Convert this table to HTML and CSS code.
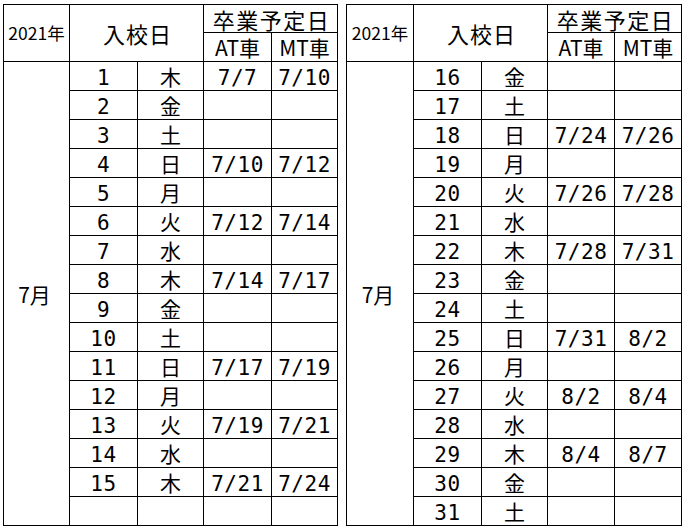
FILE: index.html
```html
<!DOCTYPE html>
<html lang="ja">
<head>
<meta charset="utf-8">
<link rel="stylesheet" href="styles.css">
</head>
<body>
<div class="page">
  <div class="sheet left">
    <div class="c year">2021年</div>
    <div class="c entry">入校日</div>
    <div class="c grad">卒業予定日</div>
    <div class="c car">AT車</div>
    <div class="c car">MT車</div>
    <div class="c month">7月</div>
    <div class="c n">1</div><div class="c w">木</div><div class="c d">7/7</div><div class="c d">7/10</div>
    <div class="c n">2</div><div class="c w">金</div><div class="c d"></div><div class="c d"></div>
    <div class="c n">3</div><div class="c w">土</div><div class="c d"></div><div class="c d"></div>
    <div class="c n">4</div><div class="c w">日</div><div class="c d">7/10</div><div class="c d">7/12</div>
    <div class="c n">5</div><div class="c w">月</div><div class="c d"></div><div class="c d"></div>
    <div class="c n">6</div><div class="c w">火</div><div class="c d">7/12</div><div class="c d">7/14</div>
    <div class="c n">7</div><div class="c w">水</div><div class="c d"></div><div class="c d"></div>
    <div class="c n">8</div><div class="c w">木</div><div class="c d">7/14</div><div class="c d">7/17</div>
    <div class="c n">9</div><div class="c w">金</div><div class="c d"></div><div class="c d"></div>
    <div class="c n">10</div><div class="c w">土</div><div class="c d"></div><div class="c d"></div>
    <div class="c n">11</div><div class="c w">日</div><div class="c d">7/17</div><div class="c d">7/19</div>
    <div class="c n">12</div><div class="c w">月</div><div class="c d"></div><div class="c d"></div>
    <div class="c n">13</div><div class="c w">火</div><div class="c d">7/19</div><div class="c d">7/21</div>
    <div class="c n">14</div><div class="c w">水</div><div class="c d"></div><div class="c d"></div>
    <div class="c n">15</div><div class="c w">木</div><div class="c d">7/21</div><div class="c d">7/24</div>
    <div class="c n"></div><div class="c w"></div><div class="c d"></div><div class="c d"></div>
  </div>
  <div class="sheet right">
    <div class="c year">2021年</div>
    <div class="c entry">入校日</div>
    <div class="c grad">卒業予定日</div>
    <div class="c car">AT車</div>
    <div class="c car">MT車</div>
    <div class="c month">7月</div>
    <div class="c n">16</div><div class="c w">金</div><div class="c d"></div><div class="c d"></div>
    <div class="c n">17</div><div class="c w">土</div><div class="c d"></div><div class="c d"></div>
    <div class="c n">18</div><div class="c w">日</div><div class="c d">7/24</div><div class="c d">7/26</div>
    <div class="c n">19</div><div class="c w">月</div><div class="c d"></div><div class="c d"></div>
    <div class="c n">20</div><div class="c w">火</div><div class="c d">7/26</div><div class="c d">7/28</div>
    <div class="c n">21</div><div class="c w">水</div><div class="c d"></div><div class="c d"></div>
    <div class="c n">22</div><div class="c w">木</div><div class="c d">7/28</div><div class="c d">7/31</div>
    <div class="c n">23</div><div class="c w">金</div><div class="c d"></div><div class="c d"></div>
    <div class="c n">24</div><div class="c w">土</div><div class="c d"></div><div class="c d"></div>
    <div class="c n">25</div><div class="c w">日</div><div class="c d">7/31</div><div class="c d">8/2</div>
    <div class="c n">26</div><div class="c w">月</div><div class="c d"></div><div class="c d"></div>
    <div class="c n">27</div><div class="c w">火</div><div class="c d">8/2</div><div class="c d">8/4</div>
    <div class="c n">28</div><div class="c w">水</div><div class="c d"></div><div class="c d"></div>
    <div class="c n">29</div><div class="c w">木</div><div class="c d">8/4</div><div class="c d">8/7</div>
    <div class="c n">30</div><div class="c w">金</div><div class="c d"></div><div class="c d"></div>
    <div class="c n">31</div><div class="c w">土</div><div class="c d"></div><div class="c d"></div>
  </div>
</div>
</body>
</html>
```

FILE: styles.css
```css
html, body {
  margin: 0;
  padding: 0;
  background: #ffffff;
}
.page {
  display: flex;
  gap: 8px;
  padding: 4px 0 0 3px;
}
.sheet {
  display: grid;
  grid-template-rows: 27px 28px repeat(16, 28px);
  gap: 1px;
  padding: 1px;
  background: #000000;
}
.left {
  grid-template-columns: 65px 67px 65px 67px 65px;
}
.right {
  grid-template-columns: 66px 67px 65px 66px 66px;
}
.c {
  background: #ffffff;
  color: #000000;
  display: flex;
  align-items: center;
  justify-content: center;
  font-family: "Noto Sans CJK JP", sans-serif;
  line-height: 24px;
  white-space: nowrap;
}
.year {
  grid-row: 1 / 3;
  grid-column: 1;
  font-size: 17.5px;
}
.entry {
  grid-row: 1 / 3;
  grid-column: 2 / 4;
  font-size: 22px;
  letter-spacing: 1px;
  padding-left: 2px;
}
.grad {
  grid-row: 1;
  grid-column: 4 / 6;
  font-size: 22px;
  letter-spacing: 1.5px;
  padding-left: 2px;
}
.car {
  font-size: 21px;
}
.month {
  grid-row: 3 / 19;
  grid-column: 1;
  font-size: 21px;
  padding-right: 4px;
}
.n, .d {
  font-family: "DejaVu Sans Mono", "Noto Sans CJK JP", monospace;
  font-size: 21px;
  letter-spacing: 0.5px;
  padding-top: 3px;
}
.w {
  font-size: 21px;
}
```
